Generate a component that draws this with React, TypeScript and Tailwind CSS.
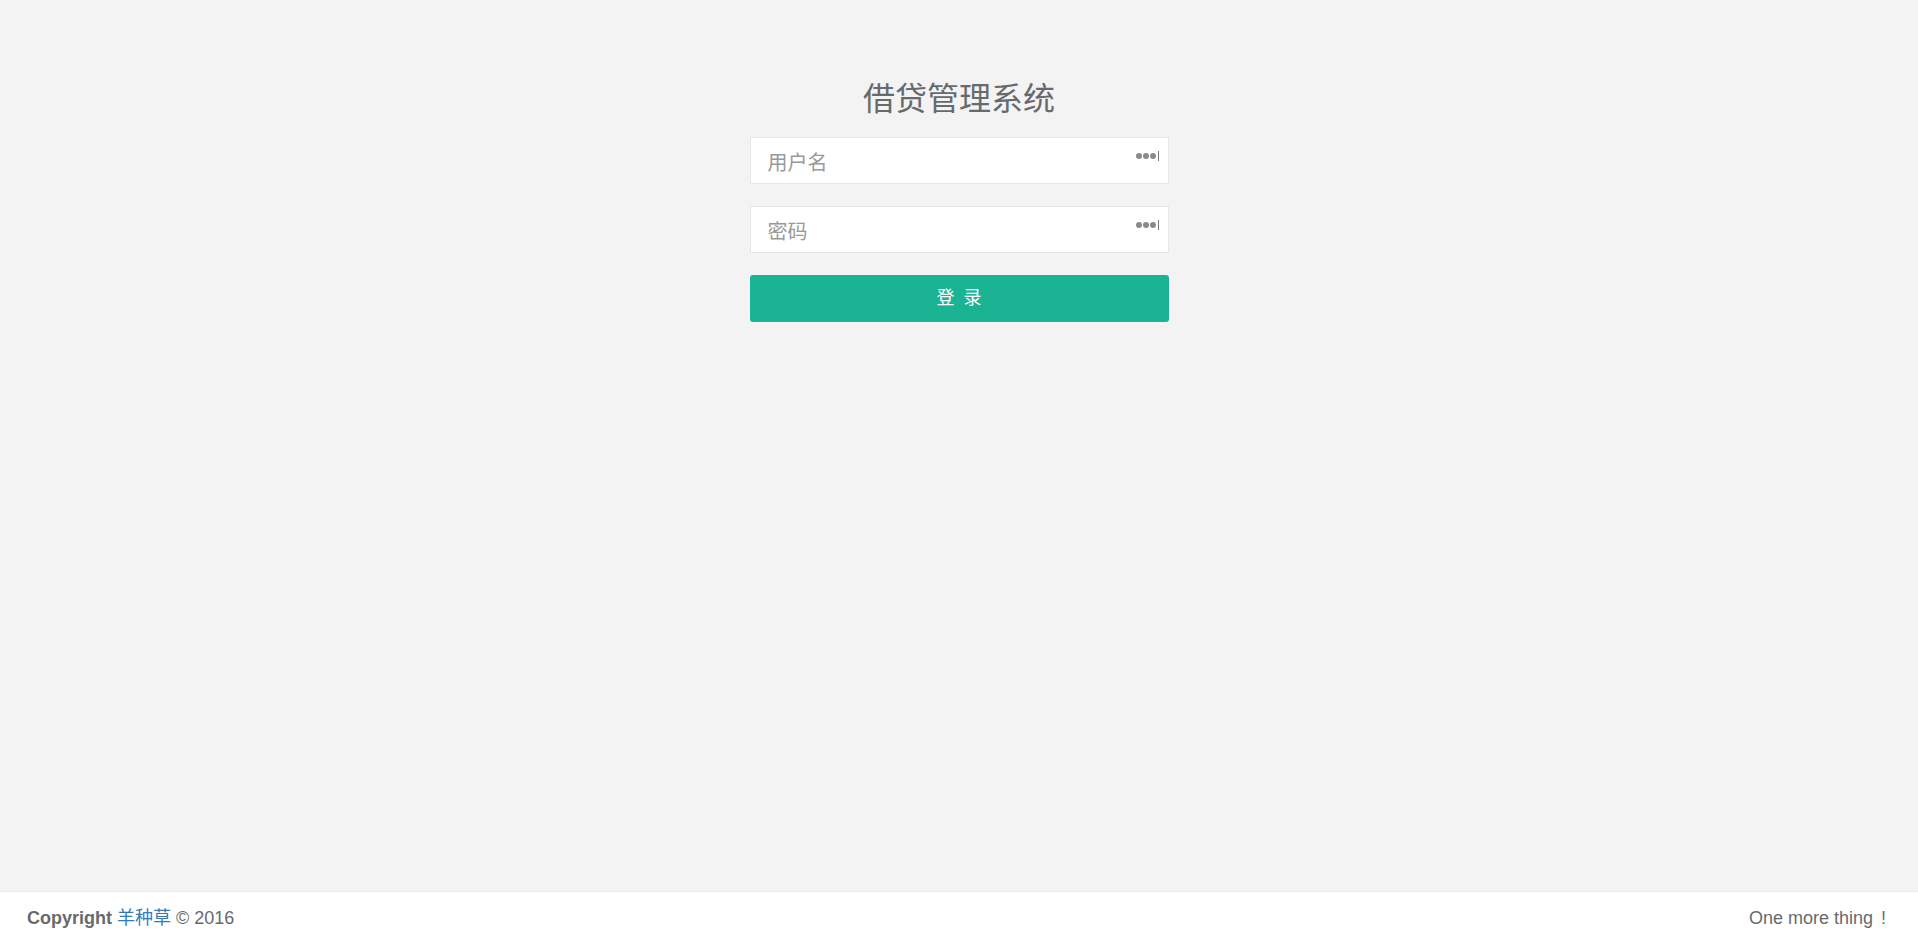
import { useState } from 'react';

function KeyDots() {
  return (
    <span className="pointer-events-none absolute right-[10px] top-[14px] flex items-center gap-[1px]">
      <span className="h-[6px] w-[6px] rounded-full bg-[#8a8a8a]" />
      <span className="h-[6px] w-[6px] rounded-full bg-[#8a8a8a]" />
      <span className="h-[6px] w-[6px] rounded-full bg-[#8a8a8a]" />
      <span className="ml-[1px] h-[10px] w-[1px] bg-[#777]" />
    </span>
  );
}

export default function App() {
  const [user, setUser] = useState('');
  const [pwd, setPwd] = useState('');

  return (
    <div
      className="flex h-screen flex-col bg-[#f3f3f4] text-[#676a6c]"
      style={{ fontFamily: '"Liberation Sans", "Noto Sans CJK SC", sans-serif' }}
    >
      <main className="flex-1">
        <div className="mx-auto w-[419px] pt-[79px]">
          <h1 className="text-center text-[32px] leading-[40px] font-normal text-[#676a6c]">借贷管理系统</h1>
          <form className="mt-[18px] flex flex-col" onSubmit={(e) => e.preventDefault()}>
            <div className="relative">
              <input
                value={user}
                onChange={(e) => setUser(e.target.value)}
                placeholder="用户名"
                className="h-[47px] w-full border border-[#e5e6e7] bg-white px-[17px] pt-[5px] text-[20px] text-[#676a6c] placeholder:text-[#999] outline-none"
              />
              <KeyDots />
            </div>
            <div className="relative mt-[22px]">
              <input
                type="password"
                value={pwd}
                onChange={(e) => setPwd(e.target.value)}
                placeholder="密码"
                className="h-[47px] w-full border border-[#e5e6e7] bg-white px-[17px] pt-[5px] text-[20px] text-[#676a6c] placeholder:text-[#999] outline-none"
              />
              <KeyDots />
            </div>
            <button
              type="submit"
              className="mt-[22px] h-[47px] w-full rounded-[3px] bg-[#1ab394] pl-[2px] text-[18px] tracking-[2px] text-white"
            >
              登 录
            </button>
          </form>
        </div>
      </main>
      <footer className="flex h-[50px] items-center justify-between border-t border-[#e7eaec] bg-white pl-[27px] pr-[32px] pt-[4px] text-[18px]">
        <div>
          <span className="font-bold">Copyright</span>{' '}
          <a href="#" className="text-[#337ab7]">羊种草</a> © 2016
        </div>
        <div>
          One more thing<span className="ml-[8px]">!</span>
        </div>
      </footer>
    </div>
  );
}
